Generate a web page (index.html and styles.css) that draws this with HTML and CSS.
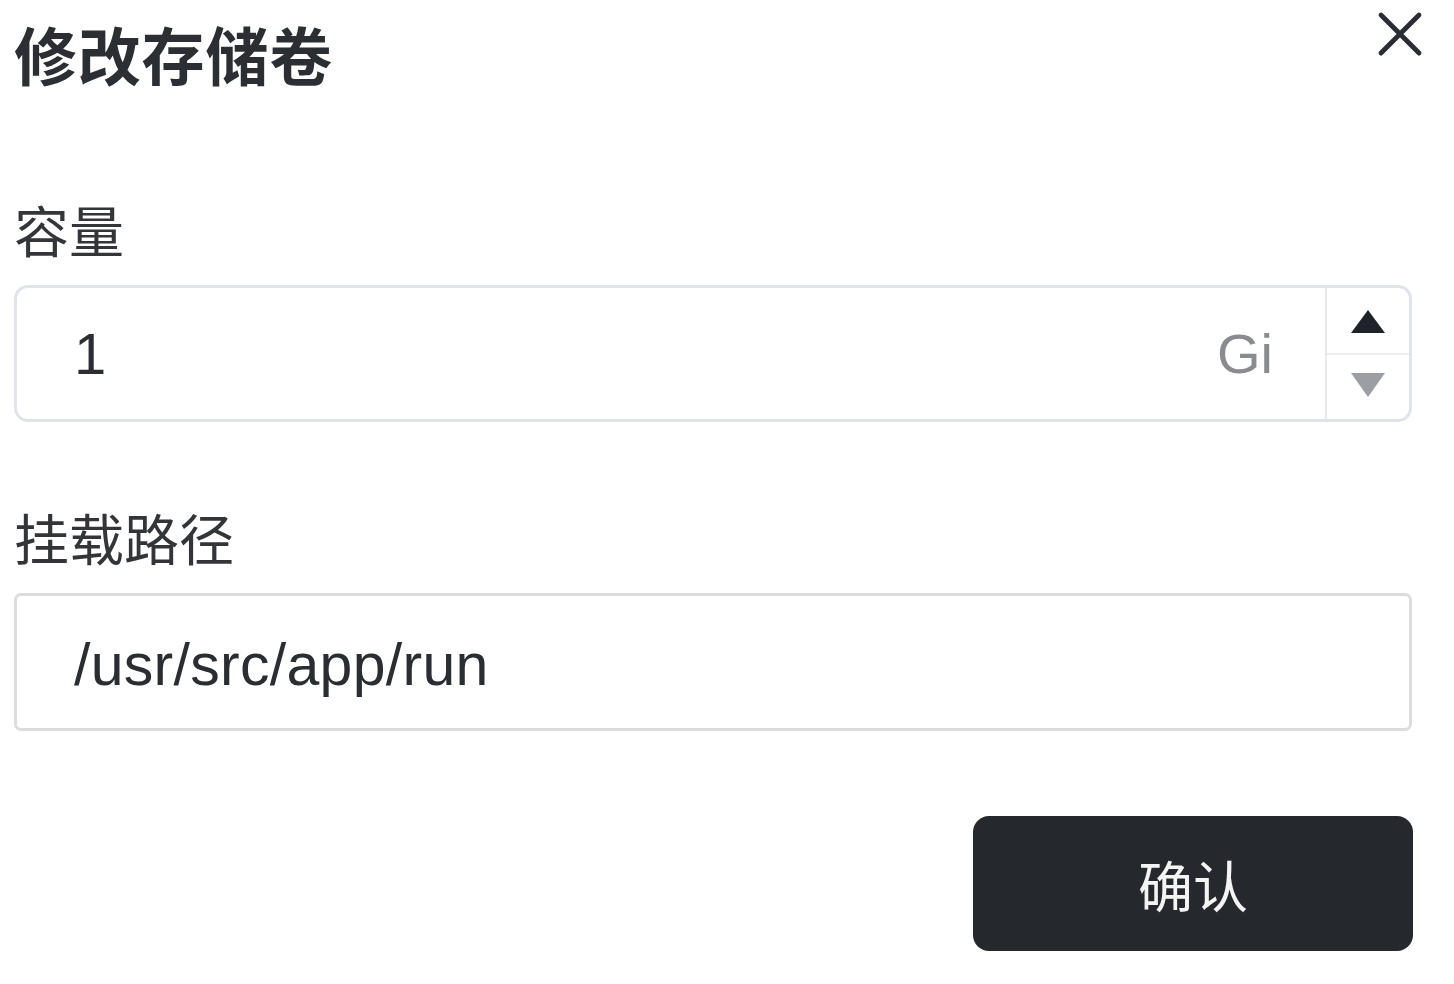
FILE: index.html
```html
<!DOCTYPE html>
<html lang="zh-CN">
<head>
<meta charset="utf-8">
<title>修改存储卷</title>
<link rel="stylesheet" href="styles.css">
</head>
<body>
<div class="dialog">
  <div class="header">
    <h1 class="title">修改存储卷</h1>
    <button class="close" aria-label="关闭">
      <svg width="48" height="48" viewBox="0 0 48 48"><path d="M5 5 L43 43 M43 5 L5 43" stroke="#2a2d32" stroke-width="4.8" stroke-linecap="round" fill="none"/></svg>
    </button>
  </div>
  <div class="field">
    <div class="label">容量</div>
    <div class="input number">
      <span class="value">1</span>
      <span class="suffix">Gi</span>
      <div class="spinner">
        <div class="step up"><svg width="36" height="26" viewBox="0 0 36 26"><path d="M18 1 L35 24 L1 24 Z" fill="#1f2229"/></svg></div>
        <div class="step down"><svg width="36" height="26" viewBox="0 0 36 26"><path d="M1 1 L35 1 L18 25 Z" fill="#9c9ea3"/></svg></div>
      </div>
    </div>
  </div>
  <div class="field second">
    <div class="label">挂载路径</div>
    <div class="input text">
      <span class="value">/usr/src/app/run</span>
    </div>
  </div>
  <div class="actions">
    <button class="confirm">确认</button>
  </div>
</div>
</body>
</html>
```
FILE: styles.css
```css
* { box-sizing: border-box; }
html, body { margin: 0; padding: 0; background: #ffffff; }
body {
  font-family: "Liberation Sans", "Noto Sans CJK SC", sans-serif;
  color: #2a2d32;
}
.dialog {
  width: 1398px;
  margin-left: 14px;
}
.header {
  display: flex;
  justify-content: space-between;
  align-items: flex-start;
  margin-right: -12px;
  height: 110px;
}
.title {
  margin: 0;
  font-family: "Noto Sans CJK SC", sans-serif;
  font-weight: 700;
  font-size: 63px;
  line-height: 106px;
  color: #2b2e33;
  letter-spacing: 0.8px;
}
.close {
  margin-top: 10px;
  padding: 0;
  border: 0;
  background: transparent;
  width: 48px;
  height: 48px;
  display: block;
}
.close svg { display: block; }
.field { margin-top: 79px; }
.field.second { margin-top: 75px; }
.label {
  font-family: "Noto Sans CJK SC", sans-serif;
  font-size: 55px;
  line-height: 78px;
  color: #333539;
}
.input {
  margin-top: 18px;
  display: flex;
  align-items: center;
  background: #fff;
  font-size: 58px;
}
.input .value { color: #2a2d31; }
.input.number {
  height: 137px;
  border: 3px solid #e1e3ea;
  border-radius: 14px;
  padding-left: 57px;
}
.input.number .value { flex: 1; }
.suffix {
  color: #8a8b8e;
  margin-right: 52px;
  font-size: 56px;
}
.spinner {
  align-self: stretch;
  width: 84px;
  border-left: 2px solid #e6e8ee;
  display: flex;
  flex-direction: column;
}
.step {
  flex: 1;
  display: flex;
  align-items: center;
  justify-content: center;
}
.step svg { display: block; }
.step.up { border-bottom: 2px solid #eceef2; padding-top: 4px; }
.step.down { padding-bottom: 4px; }
.input.text {
  height: 138px;
  border: 3px solid #dcdcdc;
  border-radius: 7px;
  padding-left: 57px;
  font-size: 59px;
  letter-spacing: 0.3px;
}
.input.text .value { padding-top: 6px; }
.actions {
  display: flex;
  justify-content: flex-end;
  margin-top: 85px;
}
.confirm {
  width: 440px;
  height: 135px;
  margin-right: -1px;
  border: 0;
  border-radius: 16px;
  background: #25282d;
  color: #f4f4f4;
  font-family: "Noto Sans CJK SC", sans-serif;
  font-size: 55px;
  padding: 0 0 2px 0;
}
```
